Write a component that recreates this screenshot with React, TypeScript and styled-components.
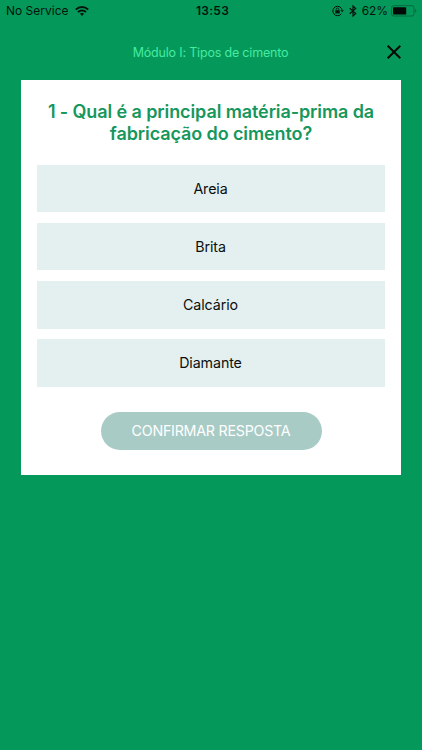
import React from 'react';
import styled, { createGlobalStyle } from 'styled-components';

const Global = createGlobalStyle`
  * { box-sizing: border-box; }
  body { margin: 0; background: #04995a; font-family: Inter, "Liberation Sans", sans-serif; }
`;

const Screen = styled.main`
  width: 422px;
  height: 750px;
  background: #04995a;
  overflow: hidden;
`;

const StatusBar = styled.div`
  display: grid;
  grid-template-columns: 1fr auto 1fr;
  align-items: center;
  height: 21px;
  padding: 0 5px 0 6px;
  font-size: 12px;
  line-height: 21px;
  color: #02140c;
`;

const StatusGroup = styled.div<{ $end?: boolean }>`
  display: flex;
  align-items: center;
  gap: ${(p) => (p.$end ? 5 : 6)}px;
  justify-content: ${(p) => (p.$end ? 'flex-end' : 'flex-start')};

  svg { display: block; flex: none; }
`;

const StatusText = styled.span<{ $bold?: boolean; $spacing?: number }>`
  font-weight: ${(p) => (p.$bold ? 600 : 400)};
  letter-spacing: ${(p) => p.$spacing ?? 0}px;
  white-space: nowrap;
`;

const ClockText = styled(StatusText)`
  padding-left: 2px;
`;

const BatteryStatus = styled.div`
  display: flex;
  align-items: center;
  gap: 3px;
`;

const Header = styled.header`
  display: grid;
  grid-template-columns: 36px 1fr 36px;
  align-items: center;
  height: 59px;
  padding: 4px 10px 0;
`;

const ModuleTitle = styled.div`
  grid-column: 2;
  padding: 0 1px 1px 0;
  text-align: center;
  font-size: 12.5px;
  letter-spacing: -0.18px;
  color: #45eba0;
`;

const CloseButton = styled.button`
  display: flex;
  justify-content: center;
  padding: 0 0 1px;
  border: 0;
  background: none;
`;

const Card = styled.section`
  display: flex;
  flex-direction: column;
  align-items: center;
  width: 380px;
  height: 395px;
  margin-left: 21px;
  padding: 21px 15.7px 0;
  background: #fff;
`;

const Question = styled.h1`
  margin: 0;
  font-size: 18px;
  line-height: 22px;
  font-weight: 600;
  letter-spacing: -0.1px;
  text-align: center;
  white-space: nowrap;
  color: #16975c;
`;

const Answers = styled.div`
  display: grid;
  gap: 10.2px;
  width: 100%;
  margin-top: 19.5px;
`;

const Answer = styled.button`
  height: 47.9px;
  padding: 0 1px 0 0;
  border: 0;
  background: #e4f0f0;
  font: 400 14.25px Inter, sans-serif;
  letter-spacing: -0.1px;
  color: #0b0f0f;
`;

const Confirm = styled.button`
  width: 221px;
  height: 38px;
  margin-top: 25.3px;
  padding: 0;
  border: 0;
  border-radius: 19px;
  background: #a9cbc6;
  font: 400 14.25px Inter, sans-serif;
  letter-spacing: -0.24px;
  color: #fff;
`;

const WifiIcon = () => (
  <svg width="14" height="10" viewBox="0 0 14 10" fill="none" stroke="#02140c" strokeWidth="1.9">
    <path d="M.8 3.6C4.3.2 9.7.2 13.2 3.6" />
    <path d="M3 6c2.2-2.1 5.8-2.1 8 0" />
    <path d="M4.9 7.7c1.2-1.1 3-1.1 4.2 0L7 9.9z" fill="#02140c" stroke="none" />
  </svg>
);

const RotationLockIcon = () => (
  <svg width="12" height="12" viewBox="0 0 12 12" fill="none" stroke="#02140c">
    <path d="M9.4 8.7A4.7 4.7 0 1 1 10.2 5.3" strokeWidth="1" />
    <path d="M8.4 5.2h3.4L10.1 7.3z" fill="#02140c" stroke="none" />
    <path d="M4.2 5.3V4.3a1.3 1.3 0 0 1 2.6 0v1" strokeWidth=".8" />
    <path d="M3.3 5.2h4.4v3.2H3.3z" fill="#02140c" stroke="none" />
  </svg>
);

const BluetoothIcon = () => (
  <svg width="8" height="12" viewBox="0 0 8 12" fill="none" stroke="#02140c" strokeWidth="1.2">
    <path d="M.7 3.3l6 5.2L4 11V1l2.7 2.5-6 5.2" />
  </svg>
);

const BatteryIcon = () => (
  <svg width="26" height="12" viewBox="0 0 26 12">
    <rect x=".5" y=".7" width="22.5" height="10.3" rx="2" fill="none" stroke="#036b40" />
    <rect x="2" y="2.2" width="13.2" height="7.3" rx=".6" fill="#020806" />
    <path d="M24.2 4c1.6.5 1.6 3.2 0 3.7z" fill="#036b40" />
  </svg>
);

const answers = ['Areia', 'Brita', 'Calcário', 'Diamante'];

export default function App() {
  return (
    <>
      <Global />
      <Screen>
        <StatusBar>
          <StatusGroup>
            <StatusText>No Service</StatusText>
            <WifiIcon />
          </StatusGroup>
          <ClockText $bold $spacing={0.3}>13:53</ClockText>
          <StatusGroup $end>
            <RotationLockIcon />
            <BluetoothIcon />
            <BatteryStatus>
              <StatusText $spacing={-0.1}>62%</StatusText>
              <BatteryIcon />
            </BatteryStatus>
          </StatusGroup>
        </StatusBar>
        <Header>
          <ModuleTitle>Módulo I: Tipos de cimento</ModuleTitle>
          <CloseButton aria-label="Fechar">
            <svg width="16" height="16" viewBox="0 0 16 16" stroke="#020a06" strokeWidth="2">
              <path d="M1.7 1.7l12.6 12.6M14.3 1.7L1.7 14.3" />
            </svg>
          </CloseButton>
        </Header>
        <Card>
          <Question>1 - Qual é a principal matéria-prima da<br />fabricação do cimento?</Question>
          <Answers>
            {answers.map((answer) => <Answer key={answer}>{answer}</Answer>)}
          </Answers>
          <Confirm>CONFIRMAR RESPOSTA</Confirm>
        </Card>
      </Screen>
    </>
  );
}
